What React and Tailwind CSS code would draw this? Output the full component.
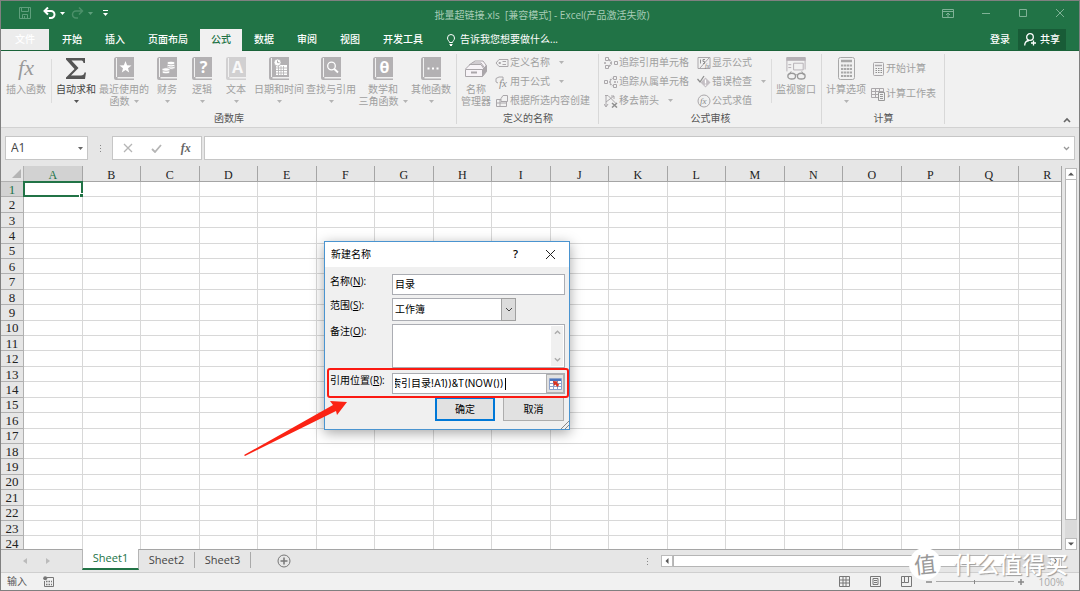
import React, { useState } from 'react';
import clsx from 'clsx';

const COLUMNS = 'ABCDEFGHIJKLMNOPQR'.split('');
const ROWS = Array.from({ length: 24 }, (_, i) => i + 1);

const TABS = ['开始', '插入', '页面布局', '公式', '数据', '审阅', '视图', '开发工具'];

const Caret = ({ className = 'text-[#b4b4b4]' }) => (
  <svg viewBox="0 0 5 3" className={clsx('w-[5px] h-[3px] shrink-0', className)}>
    <path d="M0 0h5L2.5 3z" fill="currentColor" />
  </svg>
);

/* Book icons used by the function library */
const Book = ({ children, light }) => (
  <svg viewBox="0 0 20 23" className={clsx('w-5 h-[23px]', light && 'opacity-50')}>
    <path d="M2.5 0H20v20H3.5v1.4H20V23H2a2 2 0 0 1-2-2V2.5A2.5 2.5 0 0 1 2.5 0z" fill="#b3b1b3" />
    <path d="M2.5 1v19" stroke="#f1f1f1" />
    {children}
  </svg>
);

const BookText = ({ children }) => (
  <text x="11.5" y="16" textAnchor="middle" fontSize="16" fontWeight="700" fontFamily="Open Sans" fill="#fff">
    {children}
  </text>
);

const FxIcon = () => (
  <svg viewBox="0 0 24 23" className="w-6 h-[23px] overflow-visible">
    <text x="12" y="18" textAnchor="middle" fontSize="22" fontStyle="italic" fontFamily="Liberation Serif" fill="#9a9a9a">fx</text>
  </svg>
);

const SigmaIcon = () => (
  <svg viewBox="0 0 20 23" className="w-5 h-[23px]" fill="#555">
    <path d="M0 1h19v5h-1.5c-.3-2-1-2.5-3-2.5H5.500L12.5 11 5 18.5h10c2 0 3-.7 3.500-3H20L19 22H0v-1.5L8.5 12 0 2.5z" />
  </svg>
);

const StarIcon = () => (
  <Book>
    <path d="m11.5 4 1.600 4.200 4.400.2-3.500 2.800 1.200 4.300-3.700-2.400-3.700 2.400L9 11.200 5.500 8.400l4.400-.2z" fill="#fff" />
  </Book>
);

const CoinsIcon = () => (
  <Book>
    <g fill="#fff" stroke="#b3b1b3" strokeWidth=".8">
      <ellipse cx="14" cy="10.5" rx="4" ry="1.8" />
      <ellipse cx="14" cy="8.2" rx="4" ry="1.8" />
      <ellipse cx="14" cy="6" rx="4" ry="1.8" />
      <ellipse cx="9" cy="15" rx="4" ry="1.8" />
      <ellipse cx="9" cy="12.5" rx="4" ry="1.8" />
    </g>
  </Book>
);

const DateIcon = () => (
  <Book>
    <path d="M7 8h11v10H7z" fill="#fff" />
    <path d="M7 11h11M7 13.5h11M7 16h11M9.5 9v9M12 9v9M14.5 9v9" stroke="#b3b1b3" strokeWidth=".8" />
    <circle cx="8.5" cy="5.5" r="3.5" fill="#fff" stroke="#b3b1b3" strokeWidth=".8" />
    <path d="M8.5 3.5v2.2h2" stroke="#999" fill="none" strokeWidth=".8" />
  </Book>
);

const SearchIcon = () => (
  <Book>
    <circle cx="10.5" cy="9" r="3.8" fill="none" stroke="#fff" strokeWidth="1.3" />
    <path d="m13.3 12 3.7 3.500" stroke="#fff" strokeWidth="1.8" />
  </Book>
);

const DotsIcon = () => (
  <Book>
    <path d="M6.5 10.5h2v2h-2zM11 10.5h2v2h-2zM15.5 10.5h2v2h-2z" fill="#fff" />
  </Book>
);

const CardBoxIcon = () => (
  <svg viewBox="0 0 24 23" className="w-6 h-[23px]" fill="#f7f3f7" stroke="#aaa6aa">
    <path d="m8 6 3-2h8l3 4v6" />
    <path d="m5 8 3-2h9l3 4M1.5 12 6 7.5h11l3 4.5" />
    <path d="M1.5 12.5h17v7h-17z" />
    <path d="m18.5 12.5 4-4v6l-4 5" fill="#aaa6aa" />
    <path d="M7 15.5h6" strokeWidth="2" />
  </svg>
);

const WatchIcon = () => (
  <svg viewBox="0 0 24 24" className="w-6 h-[23px]" fill="none" stroke="#b5b0b5">
    <path d="M2.5 1v14M21.5 1v12" />
    <path d="M2 0h20v4H2z" fill="#b5b0b5" stroke="none" />
    <path d="M9.5 6.5h10v7h-10zM4 8h3M4 11h3" />
    <path d="m4 19 3-4M20 19l-2-4" stroke="#999" />
    <ellipse cx="7.5" cy="20" rx="4" ry="3" stroke="#999" strokeWidth="1.4" />
    <ellipse cx="17.5" cy="20" rx="4" ry="3" stroke="#999" strokeWidth="1.4" />
    <path d="M11 19q1.5-1 3 0" stroke="#999" />
  </svg>
);

const CalculatorIcon = () => (
  <svg viewBox="0 0 17 23" className="w-[17px] h-[23px]" fill="none" stroke="#a8a8a8">
    <rect x=".5" y=".5" width="16" height="22" rx="2" />
    <path d="M3 4h11" strokeWidth="2.5" />
    <path d="M3 8.5h11M3 12h11M3 15.5h11M3 19h11" strokeWidth="2.2" strokeDasharray="2.3 .6" />
  </svg>
);

const SmallIcon = ({ children }) => (
  <svg viewBox="0 0 14 14" className="w-[14px] h-[14px] shrink-0" fill="none" stroke="#aaa7aa">
    {children}
  </svg>
);

const icons = {
  tag: (
    <SmallIcon>
      <path d="M4 3.5h9v7H4L1 7z" />
      <path d="M4 6.5h1.5v1H4zM7.5 5.5H11M7.5 8.5H11" />
    </SmallIcon>
  ),
  useFormula: (
    <SmallIcon>
      <path d="M1 3.500 4 2h4v4M1 3.500V7l2 1" />
      <text x="4" y="12" fontSize="11" fontStyle="italic" fontFamily="Liberation Serif" fill="#8f8f8f" stroke="none">fx</text>
    </SmallIcon>
  ),
  fromSelection: (
    <SmallIcon>
      <path d="M1.5 5.5h10v7h-10zM1.5 9h10M5 5.5v7" />
      <path d="M6 4.5 8 1.5h4.5v6H6z" fill="#f1f1f1" />
    </SmallIcon>
  ),
  precedents: (
    <SmallIcon>
      <path d="M1.5 1.5h3v3h-3zM1.5 9.5h3v3h-3zM10.5 5.5h3v3h-3z" />
      <path d="M5 3.500 7.5 6M5 10.500 7.5 8M6 7h3M0 7h3" strokeDasharray="2 1" strokeWidth="1.5" />
    </SmallIcon>
  ),
  dependents: (
    <SmallIcon>
      <path d="M.5 5.500h3v3h-3zM9.5 1.5h3v3h-3zM9.5 9.5h3v3h-3z" />
      <path d="M5 7h3M6 5.5 8.5 3M6 8.5 8.5 11M10 7h4" strokeDasharray="2 1" strokeWidth="1.5" />
    </SmallIcon>
  ),
  removeArrows: (
    <SmallIcon>
      <path d="M2 1v11M1 1.500h3l8 8M2 8l8-6M7 2h3v3M0 10l2 3 2-3" />
      <path d="m8 9 5 4.500M13 9l-5 4.500" strokeWidth="1.5" stroke="#8f8f8f" />
    </SmallIcon>
  ),
  showFormulas: (
    <SmallIcon>
      <path d="M1 1.5h12v11H1zM12 2 3 12" />
      <path d="M3.5 3.500v4M6 3.500h2M6 3.500v2h1.5v2H6" strokeWidth=".9" stroke="#888" />
      <text x="8" y="12" fontSize="6" fontStyle="italic" fontFamily="Liberation Serif" fill="#777" stroke="none">fx</text>
    </SmallIcon>
  ),
  errorCheck: (
    <SmallIcon>
      <path d="m.5 4 2.500 3 4-6" stroke="#8f8f8f" strokeWidth="1.3" />
      <path d="m8.5 2.500 5 5-5 5-5-5z" fill="#c4bfc4" stroke="none" />
      <path d="M8.5 4.500v4M8.5 9.500v1.300" stroke="#fff" strokeWidth="1.3" />
    </SmallIcon>
  ),
  evaluate: (
    <SmallIcon>
      <circle cx="7" cy="7" r="6" />
      <text x="3" y="10" fontSize="9" fontStyle="italic" fontFamily="Liberation Serif" fill="#888" stroke="none">fx</text>
    </SmallIcon>
  ),
  calcNow: (
    <SmallIcon>
      <rect x="2.5" y=".5" width="10" height="13" rx="1" />
      <path d="M4 3.500h7" strokeWidth="1.5" />
      <path d="M4.500 6.500h7M4.500 8.500h7M4.500 10.500h7" strokeDasharray="1.5 1" stroke="#8f8f8f" />
    </SmallIcon>
  ),
  calcSheet: (
    <SmallIcon>
      <path d="M.5 1.500h12v9H.5zM.5 4.500h12M.5 7.500h12M4.500 1.500v9M8.500 1.500v9" />
      <path d="M7.500 5.500h6v8h-6z" fill="#f1f1f1" stroke="#999" />
      <path d="M9 7.500h3M9 9.500h3M9 11.500h3" stroke="#999" />
    </SmallIcon>
  ),
};

const LargeButton = ({ icon, lines, width, arrow, active }) => (
  <button
    className={clsx(
      'flex flex-col items-center shrink-0 pt-1.5 whitespace-nowrap leading-3',
      width,
      active ? 'text-[#444]' : 'text-[#a0a0a0]'
    )}
  >
    <span className="flex h-[23px] mb-[3px]">{icon}</span>
    <span>{lines[0]}</span>
    <span className="flex items-center gap-1 h-3">
      {lines[1]}
      {arrow && <Caret className={active ? 'text-[#555]' : 'text-[#b4b4b4]'} />}
    </span>
  </button>
);

const SmallButton = ({ icon, label, arrow }) => (
  <button className="flex items-center h-[19px] gap-px text-[#a0a0a0] whitespace-nowrap">
    {icons[icon]}
    {label}
    {arrow && <Caret className="ml-2 text-[#b4b4b4]" />}
  </button>
);

const Group = ({ label, children, className }) => (
  <section className={clsx('flex flex-col shrink-0 relative after:absolute after:right-0 after:top-[3px] after:bottom-[3px] after:w-px after:bg-[#d8d8d8]', className)}>
    <div className="flex h-[61px]">{children}</div>
    <h2 className="text-center leading-3 text-[#555]">{label}</h2>
  </section>
);

const Divider = () => <span className="w-px h-11 mt-2 bg-[#dcdcdc] shrink-0" />;

const TitleBar = () => (
  <header className="bg-[#217346] text-white shrink-0">
    <div className="h-7 flex items-center justify-between">
      <div className="flex flex-1 items-center pl-[18px] pb-1">
        <button aria-label="保存">
          <svg viewBox="0 0 12 12" className="w-3 h-3" fill="none" stroke="#5f9f7c">
            <path d="M.5.5h11v11H.5zM2.5.5v4h7v-4M3.5 11.5v-4h5v4M5.5 9v2" />
          </svg>
        </button>
        <button aria-label="撤消" className="flex items-center gap-1 ml-3">
          <svg viewBox="0 0 13 12" className="w-[13px] h-3" fill="none" stroke="#fff" strokeWidth="2">
            <path d="M5 .5 1.500 4 5 7.500M2 4h6a3.500 3.500 0 0 1 0 7H6" />
          </svg>
          <Caret className="text-white" />
        </button>
        <button aria-label="恢复" className="flex items-center gap-1 ml-1.5">
          <svg viewBox="0 0 13 12" className="w-[13px] h-3" fill="none" stroke="#4b9069" strokeWidth="1.5">
            <path d="m8 .5 3.500 3.500L8 7.500M11 4H5a3.500 3.500 0 0 0 0 7h2" />
          </svg>
          <Caret className="text-[#5f9f7c]" />
        </button>
        <button aria-label="自定义快速访问工具栏" className="flex flex-col items-center gap-0.5 ml-2.5">
          <span className="w-[5px] h-px bg-white" />
          <Caret className="text-white" />
        </button>
      </div>
      <h1 className="whitespace-pre text-[#a9cdb8]">批量超链接.xls  [兼容模式] - Excel(产品激活失败)</h1>
      <div className="flex flex-1 items-center justify-end gap-[27px] pr-3.5 pb-1 text-[#7fb296]">
        <button aria-label="功能区显示选项">
          <svg viewBox="0 0 12 9" className="w-3 h-[9px]" fill="none" stroke="currentColor">
            <path d="M.5.5h11v8H.5zM.5 2.5h11M6 8V4M4 6l2-2 2 2" />
          </svg>
        </button>
        <button aria-label="最小化">
          <svg viewBox="0 0 10 10" className="w-2.5 h-2.5" stroke="currentColor"><path d="M1 5.500h8" /></svg>
        </button>
        <button aria-label="最大化">
          <svg viewBox="0 0 10 10" className="w-2.5 h-2.5" fill="none" stroke="currentColor"><path d="M1.500 1.500h7v7h-7z" /></svg>
        </button>
        <button aria-label="关闭">
          <svg viewBox="0 0 10 10" className="w-2.5 h-2.5" stroke="currentColor"><path d="m1 1 8 8M9 1 1 9" /></svg>
        </button>
      </div>
    </div>

    <nav className="flex h-[22px] border-b border-[#1a6339]">
      <button className="w-12 mr-px bg-[#ececec] text-white font-medium">文件</button>
      <div className="flex gap-px ml-px">
        {TABS.map((tab) => (
          <button
            key={tab}
            className={clsx(
              'px-[11px] font-medium whitespace-nowrap',
              tab === '公式' ? 'bg-[#f1f1f1] text-[#217346] -mb-px pb-px' : 'text-white'
            )}
          >
            {tab}
          </button>
        ))}
      </div>
      <button className="flex items-center gap-1 ml-3 whitespace-nowrap">
        <svg viewBox="0 0 10 12" className="w-2.5 h-3" fill="none" stroke="#fff">
          <path d="M3.500 8.500C3.500 7 1.500 6.500 1.500 4a3.500 3.500 0 0 1 7 0c0 2.500-2 3-2 4.500zM3.500 10.500h3M4 11.500h2" />
        </svg>
        告诉我您想要做什么...
      </button>
      <div className="flex ml-auto mr-[13px] gap-2 font-medium">
        <button>登录</button>
        <button className="flex items-center gap-1 px-1.5 bg-[#185c37]">
          <svg viewBox="0 0 12 13" className="w-3 h-[13px]" fill="none" stroke="#fff" strokeWidth="1.3">
            <circle cx="6" cy="4" r="3.3" />
            <path d="M.7 12.500C.7 9.500 2.500 7.800 5 7.500M9.500 7.500v5M7 10h5" />
          </svg>
          共享
        </button>
      </div>
    </nav>
  </header>
);

const Ribbon = () => (
  <div className="flex shrink-0 h-[77px] bg-[#f1f1f1] border-b border-[#d2d2d2] relative">
    <Group label="函数库" className="w-[456px]">
      <LargeButton icon={<FxIcon />} lines={['插入函数']} width="w-[50px]" />
      <Divider />
      <LargeButton icon={<SigmaIcon />} lines={['自动求和']} width="w-12" arrow active />
      <LargeButton icon={<StarIcon />} lines={['最近使用的', '函数']} width="w-12" arrow />
      <LargeButton icon={<CoinsIcon />} lines={['财务']} width="w-[38px]" arrow />
      <LargeButton icon={<Book><BookText>?</BookText></Book>} lines={['逻辑']} width="w-8" arrow />
      <LargeButton icon={<Book light><BookText>A</BookText></Book>} lines={['文本']} width="w-9" arrow />
      <LargeButton icon={<DateIcon />} lines={['日期和时间']} width="w-[50px]" arrow />
      <LargeButton icon={<SearchIcon />} lines={['查找与引用']} width="w-[54px]" arrow />
      <LargeButton icon={<Book><BookText>θ</BookText></Book>} lines={['数学和', '三角函数']} width="w-[50px]" arrow />
      <LargeButton icon={<DotsIcon />} lines={['其他函数']} width="w-[46px]" arrow />
    </Group>

    <Group label="定义的名称" className="w-[142px]">
      <LargeButton icon={<CardBoxIcon />} lines={['名称', '管理器']} width="w-[38px]" />
      <div className="pt-0.5">
        <SmallButton icon="tag" label="定义名称" arrow />
        <SmallButton icon="useFormula" label="用于公式" arrow />
        <SmallButton icon="fromSelection" label="根据所选内容创建" />
      </div>
    </Group>

    <Group label="公式审核" className="w-[223px]">
      <div className="pt-0.5 pl-[5px]">
        <SmallButton icon="precedents" label="追踪引用单元格" />
        <SmallButton icon="dependents" label="追踪从属单元格" />
        <SmallButton icon="removeArrows" label="移去箭头" arrow />
      </div>
      <div className="pt-0.5 pl-2 w-[82px]">
        <SmallButton icon="showFormulas" label="显示公式" />
        <SmallButton icon="errorCheck" label="错误检查" arrow />
        <SmallButton icon="evaluate" label="公式求值" />
      </div>
      <Divider />
      <LargeButton icon={<WatchIcon />} lines={['监视窗口']} width="w-12" />
    </Group>

    <Group label="计算" className="w-[123px]">
      <LargeButton icon={<CalculatorIcon />} lines={['计算选项']} width="w-12" arrow />
      <div className="flex flex-col gap-1.5 pt-2 pl-px">
        <SmallButton icon="calcNow" label="开始计算" />
        <SmallButton icon="calcSheet" label="计算工作表" />
      </div>
    </Group>

    <button aria-label="折叠功能区" className="ml-auto self-end mr-2 mb-1">
      <svg viewBox="0 0 8 6" className="w-2 h-1.5" fill="none" stroke="#666" strokeWidth="1.6"><path d="m1 5 3-3 3 3" /></svg>
    </button>
  </div>
);

const FormulaBar = () => (
  <div className="flex items-stretch shrink-0 h-[38px] pt-2 pb-1.5 px-1 text-[#aaa]">
    <div className="flex items-center w-[83px] border border-[#c6c6c6] bg-white pr-1">
      <input aria-label="名称框" defaultValue="A1" className="min-w-0 flex-1 pl-[5px] text-xs text-[#444] outline-none" />
      <Caret className="text-[#666]" />
    </div>
    <div className="flex flex-col justify-center items-center gap-0.5 w-6">
      <i className="w-px h-px bg-[#888]" />
      <i className="w-px h-px bg-[#888]" />
      <i className="w-px h-px bg-[#888]" />
    </div>
    <div className="flex items-center justify-around w-[90px] px-px border border-[#c6c6c6] bg-white">
      <button aria-label="取消输入">
        <svg viewBox="0 0 10 10" className="w-2.5 h-2.5" stroke="#b5b5b5" strokeWidth="1.3"><path d="m1 1 8 8M9 1 1 9" /></svg>
      </button>
      <button aria-label="确认输入">
        <svg viewBox="0 0 11 9" className="w-[11px] h-[9px]" fill="none" stroke="#b5b5b5" strokeWidth="1.8"><path d="m1 5 3 3 6-7" /></svg>
      </button>
      <button className="font-['Liberation_Serif',serif] italic font-bold text-xs text-[#666]">fx</button>
    </div>
    <div className="flex flex-1 items-center ml-0.5 pr-1 border border-[#c6c6c6] bg-white">
      <input aria-label="编辑栏" className="min-w-0 flex-1 outline-none" />
      <svg viewBox="0 0 7 5" className="w-[7px] h-[5px]" fill="none" stroke="#999" strokeWidth="1.3"><path d="m1 1 2.5 2.5L6 1" /></svg>
    </div>
  </div>
);

const ScrollArrow = ({ label, d }) => (
  <button aria-label={label} className="flex items-center justify-center w-3 h-3 shrink-0 border border-[#bbb] bg-white">
    <svg viewBox="0 0 6 6" className="w-1.5 h-1.5" fill="#555"><path d={d} /></svg>
  </button>
);

const Sheet = () => (
  <div className="flex flex-1 min-h-0">
    <div className="flex-1 min-w-0 overflow-hidden border-r border-b border-[#a5a5a5]">
      <table className="table-fixed border-separate border-spacing-0 w-[calc(100%+16px)] h-[calc(100%+3px)] font-['Liberation_Serif',serif] leading-none text-[#222]">
        <colgroup>
          <col className="w-[23px]" />
          {COLUMNS.map((c) => <col key={c} />)}
        </colgroup>
        <thead>
          <tr className="h-4">
            <th className="p-0 bg-[#e6e6e6] border-b border-r border-[#b0b0b0]">
              <svg viewBox="0 0 9 9" className="w-[9px] h-[9px] ml-auto mr-0.5" fill="#b4b4b4"><path d="M9 0v9H0z" /></svg>
            </th>
            {COLUMNS.map((c) => (
              <th
                key={c}
                scope="col"
                className={clsx(
                  'p-0 pt-0.5 text-xs leading-none font-normal border-b border-r border-[#a5a5a5]',
                  c === 'A' ? 'bg-[#d2d2d2] text-[#217346]' : 'bg-[#e6e6e6]'
                )}
              >
                {c}
              </th>
            ))}
          </tr>
        </thead>
        <tbody>
          {ROWS.map((r) => (
            <tr key={r}>
              <th
                scope="row"
                className={clsx(
                  'p-0 text-[13px] leading-none font-normal border-b border-r border-[#b0b0b0]',
                  r === 1 ? 'bg-[#d2d2d2] text-[#217346]' : 'bg-[#e6e6e6]'
                )}
              >
                {r}
              </th>
              {COLUMNS.map((c) => (
                <td key={c} className="relative p-0 bg-white border-b border-r border-[#d8d8d8]">
                  {c === 'A' && r === 1 && (
                    <span className="absolute -inset-px border-2 border-[#217346]">
                      <i className="absolute -right-[3px] -bottom-[3px] w-1 h-1 bg-[#217346] outline outline-white" />
                    </span>
                  )}
                </td>
              ))}
            </tr>
          ))}
        </tbody>
      </table>
    </div>
    <div className="flex flex-col items-center w-[17px] shrink-0 pt-0.5">
      <ScrollArrow label="向上滚动" d="M3 1.500 6 4.500H0z" />
      <div className="flex-1 w-3 bg-[#dadada]">
        <div className="h-[95%] bg-white border border-t-0 border-[#b5b5b5]" />
      </div>
      <ScrollArrow label="向下滚动" d="M3 4.500 6 1.500H0z" />
    </div>
  </div>
);

const SheetTabs = () => (
  <div className="flex shrink-0 h-[22px] text-[11px] text-[#444]">
    <div className="flex w-[81px] items-center gap-[19px] pl-[22px]">
      <button aria-label="上一个工作表">
        <svg viewBox="0 0 4 6" className="w-1 h-1.5" fill="#bbb"><path d="M4 0v6L0 3z" /></svg>
      </button>
      <button aria-label="下一个工作表">
        <svg viewBox="0 0 4 6" className="w-1 h-1.5" fill="#bbb"><path d="M0 0v6l4-3z" /></svg>
      </button>
    </div>
    <button className="relative -mt-px mb-0.5 w-[57px] bg-white border-x border-[#b5b5b5] border-b-2 border-b-[#217346] font-medium text-[#217346]">
      Sheet1
    </button>
    <button className="w-14 mt-0.5 mb-1 border-r border-[#aaa]">Sheet2</button>
    <button className="w-14 mt-0.5 mb-1 border-r border-[#aaa]">Sheet3</button>
    <button aria-label="新工作表" className="ml-[26px]">
      <svg viewBox="0 0 14 14" className="w-3.5 h-3.5" fill="none" stroke="#777">
        <circle cx="7" cy="7" r="6" />
        <path d="M7 3.500v7M3.500 7h7" strokeWidth="1.5" />
      </svg>
    </button>
    <div className="flex items-center ml-auto w-[432px]">
      <div className="flex flex-col gap-0.5 w-[14px]">
        <i className="w-px h-px bg-[#888]" />
        <i className="w-px h-px bg-[#888]" />
        <i className="w-px h-px bg-[#888]" />
      </div>
      <ScrollArrow label="向左滚动" d="M1.500 3 4.500 0v6z" />
      <div className="flex-1 h-3 bg-[#dadada]">
        <div className="h-3 w-[88%] bg-white border border-[#b5b5b5]" />
      </div>
      <ScrollArrow label="向右滚动" d="M4.500 3 1.500 0v6z" />
      <div className="w-[17px]" />
    </div>
  </div>
);

const StatusBar = () => (
  <footer className="flex items-center shrink-0 h-[18px] bg-[#f1f1f1] border-t border-[#cfcfcf] pl-1.5 pr-[15px] text-[#555]">
    <span>输入</span>
    <button aria-label="录制宏" className="ml-4">
      <svg viewBox="0 0 11 11" className="w-[11px] h-[11px]" fill="none" stroke="#777">
        <path d="M4 1.500h6.500v9h-9V5" />
        <path d="M3 5.500h6M3 8.500h6" strokeWidth="1.5" strokeDasharray="1.5 1" />
        <circle cx="2.2" cy="2.2" r="2" fill="#777" stroke="none" />
      </svg>
    </button>
    <div className="flex items-center gap-5 ml-auto mr-3.5 text-[#777]">
      <button aria-label="普通">
        <svg viewBox="0 0 11 11" className="w-[11px] h-[11px]" fill="none" stroke="currentColor"><path d="M.5.5h10v10H.5zM.5 4h10M.5 7h10M4 .5v10M7 .5v10" /></svg>
      </button>
      <button aria-label="页面布局">
        <svg viewBox="0 0 11 11" className="w-[11px] h-[11px]" fill="none" stroke="currentColor"><path d="M.5.5h10v10H.5zM3 2.5h5v6H3zM4 4.5h3M4 6.5h3" /></svg>
      </button>
      <button aria-label="分页预览">
        <svg viewBox="0 0 11 11" className="w-[11px] h-[11px]" fill="none" stroke="currentColor"><path d="M.5.5h10v10H.5zM3.5.5v6h4v-6M.5 6.5h3" /></svg>
      </button>
    </div>
    <div className="flex items-center gap-1 w-[98px] text-[#888]">
      <svg viewBox="0 0 6 6" className="w-1.5 h-1.5" stroke="currentColor" strokeWidth="1.5"><path d="M0 3h6" /></svg>
      <div className="flex flex-1 items-center justify-center h-px bg-[#aaa]"><i className="w-px h-1 bg-[#888]" /></div>
      <svg viewBox="0 0 6 6" className="w-1.5 h-1.5" stroke="currentColor" strokeWidth="1.5"><path d="M0 3h6M3 0v6" /></svg>
    </div>
    <span className="ml-[15px] leading-3 text-[#aaa]">100%</span>
  </footer>
);

const Field = ({ id, label, hotkey, className, children }) => (
  <div className={clsx('flex', className)}>
    <label htmlFor={id} className="w-[62px] shrink-0 pt-px whitespace-nowrap leading-3">
      {label}(<u>{hotkey}</u>):
    </label>
    {children}
  </div>
);

const NameDialog = () => {
  const [name, setName] = useState('目录');
  const [refersTo, setRefersTo] = useState('索引目录!A1))&T(NOW())');

  return (
    <div
      role="dialog"
      aria-label="新建名称"
      className="absolute left-[323px] top-[240px] w-[246px] h-[189px] border border-[#4a94d0] bg-[#f0f0f0] text-black shadow-[0_3px_12px_rgba(0,0,0,0.35)]"
    >
      <div className="flex items-center h-[25px] pl-1.5 pr-3.5 bg-white">
        <span>新建名称</span>
        <button className="ml-auto font-semibold text-[11px]">?</button>
        <button aria-label="关闭" className="ml-7">
          <svg viewBox="0 0 9 9" className="w-[9px] h-[9px]" stroke="#222"><path d="m0 0 9 9M9 0 0 9" /></svg>
        </button>
      </div>

      <div className="flex flex-col pl-[5px] pr-1 pt-[7px]">
        <Field id="name" label="名称" hotkey="N" className="h-6">
          <input id="name" value={name} onChange={(e) => setName(e.target.value)} className="flex-1 min-w-0 h-[21px] px-0.5 pb-0.5 border border-[#abadb3] bg-white outline-none" />
        </Field>
        <Field id="scope" label="范围" hotkey="S" className="h-[26px]">
          <div className="relative w-[124px] h-[23px]">
            <select id="scope" className="w-full h-full px-0.5 appearance-none border border-[#abadb3] bg-white outline-none">
              <option>工作簿</option>
            </select>
            <span className="absolute right-0 top-0 flex items-center justify-center w-[15px] h-full border border-[#a0a0a0] bg-[#dcdcdc] pointer-events-none">
              <svg viewBox="0 0 8 5" className="w-2 h-[5px]" fill="none" stroke="#444"><path d="m1 1 3 3 3-3" /></svg>
            </span>
          </div>
        </Field>
        <Field id="comment" label="备注" hotkey="O" className="h-[49px]">
          <div className="relative flex-1 h-11">
            <textarea id="comment" className="block w-full h-full resize-none border border-[#abadb3] bg-white outline-none" />
            <span className="absolute right-0.5 top-0.5 bottom-0.5 w-3 flex flex-col items-center justify-between py-1 bg-[#f0f0f0]">
              <svg viewBox="0 0 8 5" className="w-[7px] h-[5px]" fill="none" stroke="#aaa" strokeWidth="1.5"><path d="m1 4 3-3 3 3" /></svg>
              <svg viewBox="0 0 8 5" className="w-[7px] h-[5px]" fill="none" stroke="#aaa" strokeWidth="1.5"><path d="m1 1 3 3 3-3" /></svg>
            </span>
          </div>
        </Field>
        <Field id="refers" label="引用位置" hotkey="R" className="h-6">
          <div className="relative flex flex-1 min-w-0 h-[21px] border border-[#abadb3] bg-white">
            <input id="refers" value={refersTo} onChange={(e) => setRefersTo(e.target.value)} className="flex-1 min-w-0 pl-0.5 -indent-1 font-['Inter','Noto_Sans_CJK_SC',sans-serif] outline-none" />
            <span className="absolute left-28 top-1 w-px h-3 bg-black" />
            <button aria-label="选择区域" className="flex items-center justify-center w-[18px] border border-[#b0b0b0] bg-[#e1e1e1]">
              <svg viewBox="0 0 13 12" className="w-[13px] h-3">
                <path d="M.5.5h12v11H.5z" fill="#fff" stroke="#8aa2cc" />
                <path d="M1 1h11v2H1z" fill="#4b74bd" />
                <path d="M.5 5.5h12M.5 8.5h12M4.5 3v8M8.5 3v8" stroke="#8aa2cc" />
                <path d="m4 3 5 .5-1.2 1.2 2.5 2-2 2.3-2-2.500L5 8z" fill="#d8321f" />
              </svg>
            </button>
          </div>
        </Field>
        <div className="flex justify-end gap-2 pr-px">
          <button className="w-[60px] h-6 border-2 border-[#0078d7] bg-[#e1e1e1]">确定</button>
          <button className="w-[61px] h-6 border border-[#adadad] bg-[#e1e1e1]">取消</button>
        </div>
      </div>

      {/* resize grip */}
      <svg viewBox="0 0 8 8" className="absolute right-0 bottom-0 w-2 h-2" stroke="#888"><path d="m0 8 8-8M4 8l4-4" /></svg>
      {/* highlighted row */}
      <div className="absolute left-0.5 right-0 top-[126px] h-[30px] border-2 border-[#fb1a12] rounded-[3px] pointer-events-none" />
    </div>
  );
};

const Watermark = () => (
  <div className="absolute right-[11px] bottom-2.5 flex items-center gap-3 pointer-events-none">
    <span className="flex items-center justify-center w-8 h-8 rounded-full bg-white text-[22px] leading-none text-[#999] -rotate-6">值</span>
    <span className="text-[23px] leading-6 text-white font-medium [text-shadow:1px_1px_1px_#999]">什么值得买</span>
  </div>
);

const App = () => (
  <div className="relative flex flex-col h-screen overflow-hidden border border-[#808080] bg-[#e6e6e6] font-['Open_Sans','Noto_Sans_CJK_SC',sans-serif] text-[10px]">
    <TitleBar />
    <Ribbon />
    <FormulaBar />
    <Sheet />
    <SheetTabs />
    <StatusBar />
    <NameDialog />
    <svg viewBox="0 0 104 56" className="absolute left-[242px] top-[399px] w-[104px] h-14" fill="#fb2314">
      <path d="M1 55 90 5l-3-4 17 1-10 13-1-4L2 56z" />
    </svg>
    <Watermark />
  </div>
);

export default App;
